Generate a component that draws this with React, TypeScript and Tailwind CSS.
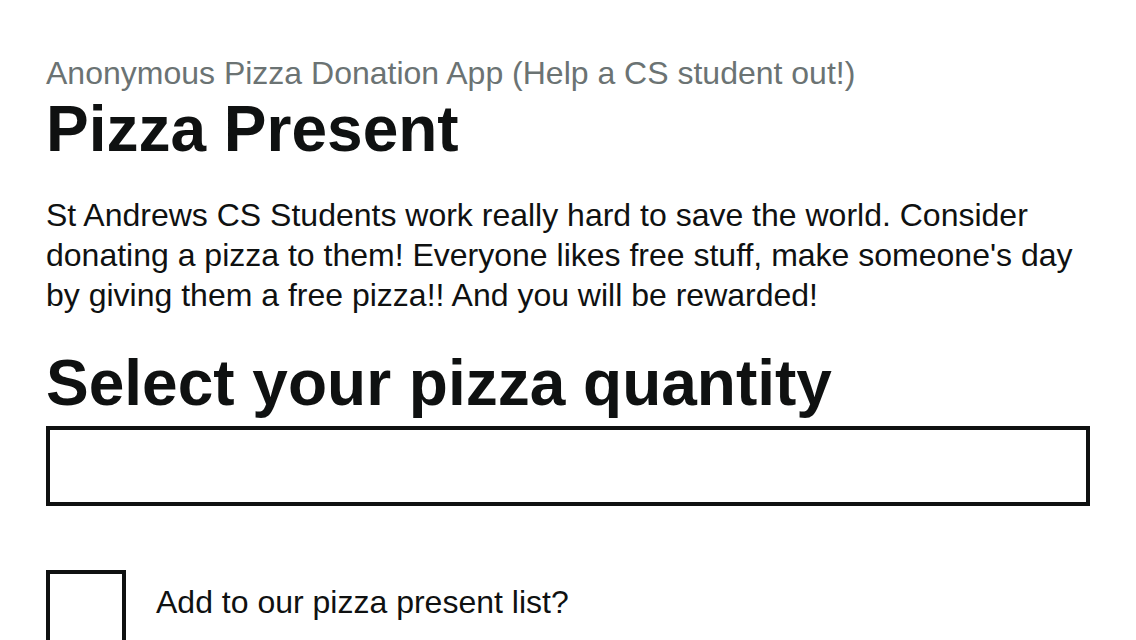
import React, { useState } from 'react';

const App: React.FC = () => {
  const [quantity, setQuantity] = useState('');
  const [addToList, setAddToList] = useState(false);

  return (
    <div className="min-h-screen bg-white px-[46px] pt-[53px] text-[#0f1111] font-['Liberation_Sans',Arial,sans-serif]">
      {/* 헤더 */}
      <p className="text-[32px] leading-[40px] text-[#6b7373]">
        Anonymous Pizza Donation App (Help a CS student out!)
      </p>
      <h1 className="text-[64px] leading-[72px] font-bold">Pizza Present</h1>

      <p className="mt-[30px] text-[32px] leading-[40px]">
        St Andrews CS Students work really hard to save the world. Consider donating a pizza to them! Everyone likes
        free stuff, make someone's day by giving them a free pizza!! And you will be rewarded!
      </p>

      {/* 수량 입력 */}
      <h2 className="mt-[32px] text-[64px] leading-[72px] font-bold">Select your pizza quantity</h2>
      <input
        type="text"
        value={quantity}
        onChange={(e) => setQuantity(e.target.value)}
        className="mt-[7px] block w-full h-[80px] border-4 border-[#0f1111] bg-white px-4 text-[32px] outline-none"
      />

      {/* 체크박스 */}
      <label className="mt-[64px] flex items-start gap-[30px] cursor-pointer">
        <button
          type="button"
          onClick={() => setAddToList(!addToList)}
          className="w-[80px] h-[80px] shrink-0 border-4 border-[#0f1111] bg-white"
          aria-pressed={addToList}
        >
          {addToList && <span className="text-[48px] leading-none">✓</span>}
        </button>
        <span className="mt-[12px] text-[32px] leading-[40px]">Add to our pizza present list?</span>
      </label>
    </div>
  );
};

export default App;
